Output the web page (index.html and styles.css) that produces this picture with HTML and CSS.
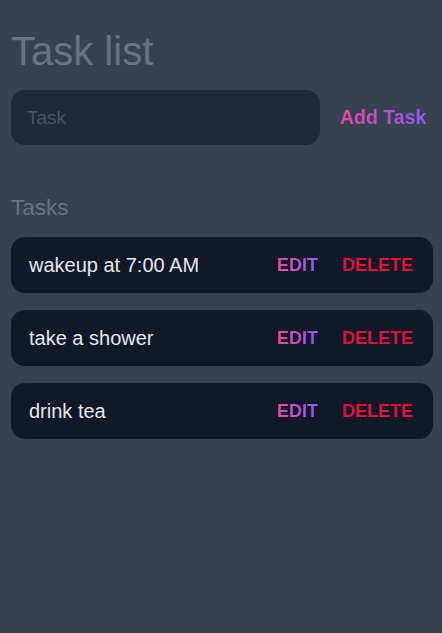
FILE: index.html
```html
<!DOCTYPE html>
<html lang="en">
<head>
<meta charset="utf-8">
<title>Task list</title>
<link rel="stylesheet" href="styles.css">
</head>
<body>
<main class="app">
  <h1 class="title">Task list</h1>
  <form class="new-task">
    <input class="task-input" type="text" placeholder="Task">
    <button class="add-btn" type="button"><span class="grad">Add Task</span></button>
  </form>
  <h2 class="section">Tasks</h2>
  <ul class="tasks">
    <li class="task">
      <span class="task-text">wakeup at 7:00 AM</span>
      <div class="actions">
        <button class="edit" type="button"><span class="grad">EDIT</span></button>
        <button class="delete" type="button">DELETE</button>
      </div>
    </li>
    <li class="task">
      <span class="task-text">take a shower</span>
      <div class="actions">
        <button class="edit" type="button"><span class="grad">EDIT</span></button>
        <button class="delete" type="button">DELETE</button>
      </div>
    </li>
    <li class="task">
      <span class="task-text">drink tea</span>
      <div class="actions">
        <button class="edit" type="button"><span class="grad">EDIT</span></button>
        <button class="delete" type="button">DELETE</button>
      </div>
    </li>
  </ul>
</main>
</body>
</html>
```
FILE: styles.css
```css
* { box-sizing: border-box; }
html, body {
  margin: 0;
  background: #374151;
  font-family: "Liberation Sans", Arial, sans-serif;
}
body { min-height: 633px; }
.app {
  padding: 28px 9px 20px 11px;
}
.title {
  margin: 0;
  font-size: 40px;
  font-weight: 400;
  color: #6b7280;
  line-height: 46px;
}
.new-task {
  display: flex;
  align-items: center;
  margin-top: 16px;
}
.task-input {
  width: 309px;
  height: 55px;
  border: none;
  outline: none;
  border-radius: 14px;
  background: #1f2937;
  padding: 0 16px;
  font-family: inherit;
  font-size: 19px;
  color: #e5e7eb;
}
.task-input::placeholder { color: #4b5563; }
.add-btn {
  margin-left: 20px;
  background: none;
  border: none;
  padding: 0;
  font-family: inherit;
  font-size: 19.5px;
  font-weight: 700;
  cursor: pointer;
}
.grad {
  background: linear-gradient(90deg, #ec4899, #8b5cf6);
  -webkit-background-clip: text;
  background-clip: text;
  color: transparent;
}
.section {
  margin: 50px 0 0;
  font-size: 22.5px;
  font-weight: 400;
  color: #6b7280;
  line-height: 26px;
}
.tasks {
  list-style: none;
  margin: 16px 0 0;
  padding: 0;
  display: flex;
  flex-direction: column;
  gap: 17px;
}
.task {
  height: 56px;
  border-radius: 14px;
  background: #111827;
  display: flex;
  align-items: center;
  justify-content: space-between;
  padding: 0 20px 0 18px;
}
.task-text {
  font-size: 20px;
  color: #e5e7eb;
}
.actions {
  display: flex;
  align-items: center;
  gap: 24px;
}
.edit, .delete {
  background: none;
  border: none;
  padding: 0;
  font-family: inherit;
  font-size: 18px;
  font-weight: 700;
  cursor: pointer;
}
.delete { color: #dc143c; }
```
